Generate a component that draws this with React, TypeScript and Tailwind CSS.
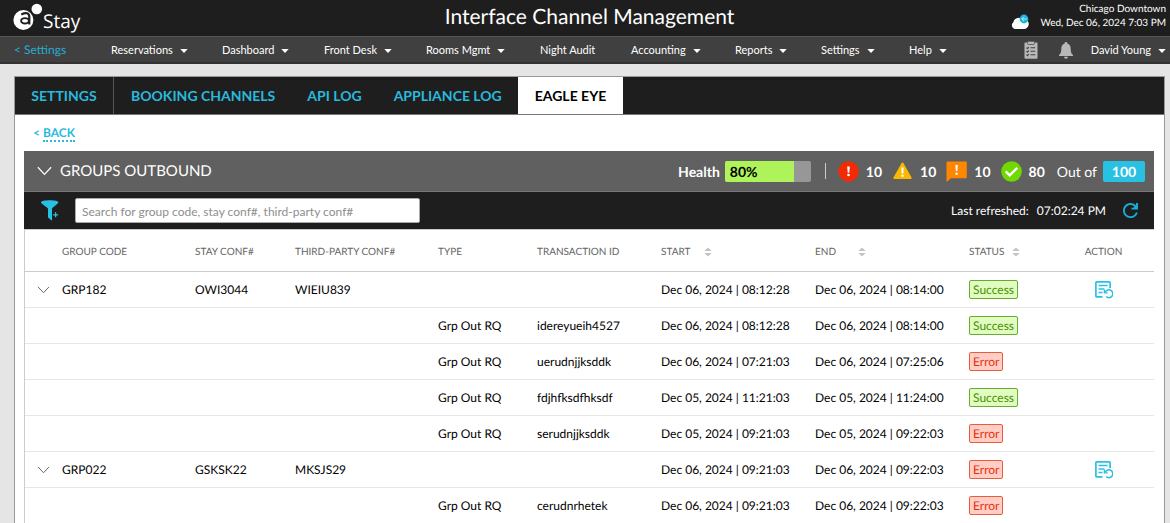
import React from "react";

const navItems = [
  { label: "Reservations", menu: true, width: "w-[111px]" },
  { label: "Dashboard", menu: true, width: "w-[102px]" },
  { label: "Front Desk", menu: true, width: "w-[102px]" },
  { label: "Rooms Mgmt", menu: true, width: "w-[114px]" },
  { label: "Night Audit", menu: false, width: "w-[91px]" },
  { label: "Accounting", menu: true, width: "w-[104px]" },
  { label: "Reports", menu: true, width: "w-[86px]" },
  { label: "Settings", menu: true, width: "w-[88px]" },
  { label: "Help", menu: true, width: "w-[50px]" },
];

const tabs = ["BOOKING CHANNELS", "API LOG", "APPLIANCE LOG"];

type Row = {
  group?: string;
  stay?: string;
  third?: string;
  type?: string;
  id?: string;
  start: string;
  end: string;
  ok: boolean;
};

const rows: Row[] = [
  { group: "GRP182", stay: "OWI3044", third: "WIEIU839", start: "Dec 06, 2024 | 08:12:28", end: "Dec 06, 2024 | 08:14:00", ok: true },
  { type: "Grp Out RQ", id: "idereyueih4527", start: "Dec 06, 2024 | 08:12:28", end: "Dec 06, 2024 | 08:14:00", ok: true },
  { type: "Grp Out RQ", id: "uerudnjjksddk", start: "Dec 06, 2024 | 07:21:03", end: "Dec 06, 2024 | 07:25:06", ok: false },
  { type: "Grp Out RQ", id: "fdjhfksdfhksdf", start: "Dec 05, 2024 | 11:21:03", end: "Dec 05, 2024 | 11:24:00", ok: true },
  { type: "Grp Out RQ", id: "serudnjjksddk", start: "Dec 05, 2024 | 09:21:03", end: "Dec 05, 2024 | 09:22:03", ok: false },
  { group: "GRP022", stay: "GSKSK22", third: "MKSJS29", start: "Dec 06, 2024 | 09:21:03", end: "Dec 06, 2024 | 09:22:03", ok: false },
  { type: "Grp Out RQ", id: "cerudnrhetek", start: "Dec 06, 2024 | 09:21:03", end: "Dec 06, 2024 | 09:22:03", ok: false },
];

function Caret() {
  return (
    <svg width="8" height="4" viewBox="0 0 8 4" className="mt-px shrink-0" aria-hidden="true">
      <path d="M0.3 0h7.4L4 4z" fill="#fff" />
    </svg>
  );
}

function Chevron({ className }: { className: string }) {
  return (
    <svg viewBox="0 0 14 9" fill="none" className={className} aria-hidden="true">
      <path d="M.8 1l6.2 6.6L13.200 1" stroke="currentColor" strokeWidth="1.1" />
    </svg>
  );
}

function Sorter() {
  return (
    <svg width="8" height="10" viewBox="0 0 8 10" aria-hidden="true">
      <path d="M4 .5L7.700 4H.3zM4 9.500L.3 6h7.400z" fill="#c4c4c4" />
    </svg>
  );
}

function Logo() {
  return (
    <svg width="30" height="28" viewBox="0 0 30 28" aria-hidden="true">
      <circle cx="10.400" cy="17" r="10" fill="#fff" />
      <circle cx="23.800" cy="6" r="6.400" fill="#1e1e1e" />
      <circle cx="23.800" cy="6" r="5.300" fill="#fff" />
      <path d="M8.300 11.400q7.500-3.400 8 2v8" fill="none" stroke="#1e1e1e" strokeWidth="2.200" />
      <ellipse cx="12" cy="17.800" rx="3.900" ry="2.700" fill="none" stroke="#1e1e1e" strokeWidth="1.900" />
    </svg>
  );
}

function Weather() {
  return (
    <svg width="20" height="16" viewBox="0 0 20 16" aria-hidden="true">
      <path d="M4.500 15A4 4 0 0 1 3.500 8 5.300 5.300 0 0 1 12 5 4.900 4.900 0 0 1 15 15z" fill="#fff" />
      <circle cx="14" cy="5" r="4.400" fill="#1eb4dc" />
      <path d="M16.800 5h-5M14 2.800L11.800 5 14 7.200" fill="none" stroke="#d5f4fc" strokeWidth=".8" />
    </svg>
  );
}

function Clipboard() {
  return (
    <svg width="14" height="18" viewBox="0 0 14 18" aria-hidden="true">
      <rect x="0.500" y="1.500" width="13" height="16.300" rx="1" fill="#b8b8b8" />
      <rect x="3.500" y="0.300" width="7" height="3.200" rx="1" fill="#b8b8b8" stroke="#404040" strokeWidth=".7" />
      <path d="M2.500 6.700l1 1 1.300-1.700M2.500 10.200l1 1 1.300-1.700M2.500 13.700l1 1 1.300-1.700M6.500 6.800h4.700M6.500 10.300h4.700M6.500 13.800h4.700" fill="none" stroke="#404040" strokeWidth="1.100" />
    </svg>
  );
}

function Bell() {
  return (
    <svg width="14" height="17" viewBox="0 0 14 17" aria-hidden="true">
      <path d="M7 0a1.300 1.300 0 0 0-1.300 1.500C3.300 2.200 2.300 4.200 2.300 6.500 2.300 10.500 1.500 11.700 0 13v1h14v-1c-1.500-1.300-2.300-2.500-2.300-6.500 0-2.300-1-4.300-3.400-5A1.300 1.300 0 0 0 7 0zM5 14.700a2 2 0 0 0 4 0z" fill="#b8b8b8" />
    </svg>
  );
}

function Filter() {
  return (
    <svg width="18" height="21" viewBox="0 0 18 21" aria-hidden="true">
      <path d="M0 2.300C0-.5 17.400-.5 17.400 2.300c0 1.300-5.900 5.200-6.400 6.400v12L7 17.400V8.700C6.500 7.500 0 3.600 0 2.300z" fill="#29c1e3" />
      <path d="M14.600 11.200v7.200M11 14.800h7" stroke="#1e1e1e" strokeWidth="3" />
      <path d="M14.600 12.300v5M12.100 14.800h5" stroke="#29c1e3" strokeWidth="1.200" />
    </svg>
  );
}

function ErrorIcon() {
  return (
    <svg width="21" height="21" viewBox="0 0 21 21" aria-hidden="true">
      <circle cx="10.500" cy="10.500" r="10.200" fill="#f32b04" />
      <path d="M9.200 5.500h2.600l-.5 6.200H9.700z" fill="#fff" />
      <circle cx="10.500" cy="14" r="1.300" fill="#fff" />
    </svg>
  );
}

function WarningIcon() {
  return (
    <svg width="19" height="18" viewBox="0 0 19 18" aria-hidden="true">
      <path d="M8.500 1.200q1-1.200 2 0L18.500 15.500q.5 1.500-1 1.500h-16Q0 17 .5 15.500z" fill="#fbb800" />
      <path d="M8.300 5.500h2.400l-.4 6H8.700z" fill="#fff" />
      <circle cx="9.500" cy="13.800" r="1.200" fill="#fff" />
    </svg>
  );
}

function MessageIcon() {
  return (
    <svg width="21" height="21" viewBox="0 0 21 21" aria-hidden="true">
      <path d="M1 .5h19q.8 0 .8.800V16.500q0 .8-.8.800H5L.5 21V1.300Q.5.500 1 .5z" fill="#ff8700" />
      <path d="M9.400 4h2.400l-.4 6H9.800z" fill="#fff" />
      <circle cx="10.600" cy="12.800" r="1.200" fill="#fff" />
    </svg>
  );
}

function SuccessIcon() {
  return (
    <svg width="21" height="21" viewBox="0 0 21 21" aria-hidden="true">
      <circle cx="10.500" cy="10.500" r="10.300" fill="#6fd900" />
      <path d="M4.700 10.300l4 4 7.500-7.500" fill="none" stroke="#fff" strokeWidth="2.400" />
    </svg>
  );
}

function Refresh() {
  return (
    <svg width="15" height="15" viewBox="4 4 16 16" aria-hidden="true">
      <path
        d="M17.65 6.35A7.958 7.958 0 0 0 12 4c-4.420 0-7.990 3.580-7.990 8s3.570 8 7.990 8c3.730 0 6.840-2.550 7.730-6h-2.080A5.990 5.990 0 0 1 12 18c-3.310 0-6-2.690-6-6s2.690-6 6-6c1.660 0 3.140.69 4.220 1.780L15 9h-2v2h7V4h-2z"
        fill="#14aed6"
      />
    </svg>
  );
}

function Resend() {
  return (
    <svg width="18" height="18" viewBox="0 0 18 18" fill="none" stroke="#29c1e3" aria-hidden="true">
      <path d="M7.500 15.800H1.800q-.9 0-.9-.9V1.800q0-.9.900-.9h12.400q.9 0 .9.900v5.500" strokeWidth="1.700" />
      <path d="M3.500 4.500h9M3.500 8h6M3.500 11.500h4" strokeWidth="1.700" />
      <path d="M10.300 11.200a3.900 3.900 0 1 1 .8 4.300" strokeWidth="1.500" />
      <path d="M9.400 8.600v3.300h3.300" strokeWidth="1.400" />
    </svg>
  );
}

const th = "px-0 pt-[3px] pb-0 text-left text-[10px] font-normal text-[#666]";

export default function App() {
  return (
    <div className="min-h-screen bg-[#e5e5e5] font-['Lato',sans-serif] text-[12px] text-black [text-rendering:geometricPrecision]">
      <header className="grid h-9 grid-cols-[1fr_auto_1fr] items-start bg-[#1e1e1e] pt-px pr-1 pl-[13px] text-white">
        <div className="flex items-center">
          <Logo />
          <span className="pt-2 font-['Open_Sans',sans-serif] text-[19px] leading-6">Stay</span>
        </div>
        <h1 className="text-[21px] leading-8">Interface Channel Management</h1>
        <div className="flex items-center justify-end gap-[10px] pt-px text-right text-[10px] leading-[14px]">
          <div className="pt-3"><Weather /></div>
          <p>
            Chicago Downtown
            <br />
            Wed, Dec 06, 2024 7:03 PM
          </p>
        </div>
      </header>

      <nav className="flex h-7 items-center border-t border-b-2 border-t-[#555] border-b-[#333] bg-[#404040] pt-px pr-1 pl-[14px] text-[11px] text-white">
        <a href="#settings" className="w-[97px] text-[12px] text-[#29abd0]">&lt; Settings</a>
        {navItems.map((item) => (
          <button key={item.label} type="button" className={`flex shrink-0 items-center gap-[7px] whitespace-nowrap ${item.width}`}>
            {item.label}
            {item.menu && <Caret />}
          </button>
        ))}
        <div className="ml-auto flex items-center">
          <button type="button" aria-label="Tasks" className="mr-[21px]"><Clipboard /></button>
          <button type="button" aria-label="Notifications" className="mr-[18px]"><Bell /></button>
          <button type="button" className="flex items-center gap-[7px] whitespace-nowrap">
            David Young
            <Caret />
          </button>
        </div>
      </nav>

      <main className="mt-3 mr-[5px] ml-[14px] border border-[#999] bg-white pb-6">
        <div className="flex h-[38px] items-stretch border-b border-[#777] bg-[#1e1e1e] text-[14px] font-bold text-[#29b9dd]">
          <button type="button" className="mr-px w-[99px] border-r border-[#555]">SETTINGS</button>
          {tabs.map((tab) => (
            <button key={tab} type="button" className="px-4">{tab}</button>
          ))}
          <button type="button" className="bg-white px-[17px] text-black">EAGLE EYE</button>
        </div>

        <div className="flex h-9 items-center gap-[3px] pl-[18px] text-[12px] font-bold text-[#29b9dd]">
          <span>&lt;</span>
          <a href="#back" className="border-b-2 border-dotted border-[#29b9dd] leading-[15px]">BACK</a>
        </div>

        <section className="mr-[10px] ml-[9px] border-l border-[#ccc]">
          <div className="-ml-px flex h-[41px] items-center border-b border-[#777] bg-[#606060] pr-[9px] pl-[13px] text-white">
            <button type="button" aria-label="Collapse groups" className="mr-2"><Chevron className="h-[10px] w-[15px]" /></button>
            <h2 className="pt-px text-[15px]">GROUPS OUTBOUND</h2>
            <div className="ml-auto flex items-center text-[14px] font-bold">
              <span className="mr-[5px]">Health</span>
              <div className="h-[21px] w-[86px] rounded-xs bg-[#979797]">
                <div className="flex h-full w-4/5 items-center rounded-l-xs bg-[#aef359] pl-[5px] text-black">80%</div>
              </div>
              <span className="mr-3 ml-[14px] h-4 w-px bg-[#ccc]" />
              <ErrorIcon />
              <span className="mr-[11px] ml-[7px]">10</span>
              <WarningIcon />
              <span className="mr-[10px] ml-2">10</span>
              <MessageIcon />
              <span className="mr-[10px] ml-[7px]">10</span>
              <SuccessIcon />
              <span className="mr-3 ml-[7px]">80</span>
              <span className="mr-[6px] font-normal">Out of</span>
              <span className="flex h-[21px] w-[42px] items-center justify-center rounded-xs bg-[#29c1e3]">100</span>
            </div>
          </div>

          <div className="-ml-px flex h-[37px] items-center bg-[#1e1e1e] pr-4 pl-[17px] text-white">
            <button type="button" aria-label="Add filter" className="mr-4"><Filter /></button>
            <input
              type="text"
              aria-label="Search"
              placeholder="Search for group code, stay conf#, third-party conf#"
              className="h-[25px] w-[345px] rounded-xs border border-[#aaa] bg-white px-[6px] pt-px text-[12px] text-black outline-none placeholder:text-[#8e8e8e]"
            />
            <span className="ml-auto pt-px">Last refreshed:</span>
            <span className="ml-2 pt-px">07:02:24 PM</span>
            <button type="button" aria-label="Refresh" className="ml-[17px]"><Refresh /></button>
          </div>

          <table className="w-full table-fixed border-collapse border-t border-[#ccc]">
            <colgroup>
              <col className="w-[37px]" />
              <col className="w-[133px]" />
              <col className="w-[100px]" />
              <col className="w-[143px]" />
              <col className="w-[99px]" />
              <col className="w-[124px]" />
              <col className="w-[154px]" />
              <col className="w-[154px]" />
              <col className="w-[84px]" />
              <col />
            </colgroup>
            <thead>
              <tr className="h-[42px] border-b border-[#ccc]">
                <td className="p-0" />
                <th className={th}>GROUP CODE</th>
                <th className={th}>STAY CONF#</th>
                <th className={th}>THIRD-PARTY CONF#</th>
                <th className={th}>TYPE</th>
                <th className={th}>TRANSACTION ID</th>
                <th className={th}><span className="flex items-center gap-[14px]">START <Sorter /></span></th>
                <th className={th}><span className="flex items-center gap-[22px]">END <Sorter /></span></th>
                <th className={th}><span className="flex items-center gap-2">STATUS <Sorter /></span></th>
                <th className="px-0 pt-[3px] pb-0 text-center text-[10px] font-normal text-[#666]">ACTION</th>
              </tr>
            </thead>
            <tbody className="text-[12px]">
              {rows.map((row, i) => (
                <tr key={i} className="h-9 border-b border-[#e6e6e6]">
                  <td className="p-0">
                    {row.group && (
                      <button type="button" aria-label={`Collapse ${row.group}`} className="ml-3 flex text-[#666]">
                        <Chevron className="h-2 w-[13px]" />
                      </button>
                    )}
                  </td>
                  <td className="p-0">{row.group}</td>
                  <td className="p-0">{row.stay}</td>
                  <td className="p-0">{row.third}</td>
                  <td className="p-0">{row.type}</td>
                  <td className="p-0">{row.id}</td>
                  <td className="p-0">{row.start}</td>
                  <td className="p-0">{row.end}</td>
                  <td className="p-0">
                    {row.ok ? (
                      <span className="inline-block rounded-xs border border-[#68ab2e] bg-[#e0fcc0] px-[3px] leading-[17px] text-[#4a9200]">Success</span>
                    ) : (
                      <span className="inline-block rounded-xs border border-[#ea5b40] bg-[#ffcfc5] px-[3px] leading-[17px] text-[#e82c0c]">Error</span>
                    )}
                  </td>
                  <td className="p-0">
                    {row.group && (
                      <button type="button" aria-label={`Resend ${row.group}`} className="mx-auto flex"><Resend /></button>
                    )}
                  </td>
                </tr>
              ))}
            </tbody>
          </table>
        </section>
      </main>
    </div>
  );
}
